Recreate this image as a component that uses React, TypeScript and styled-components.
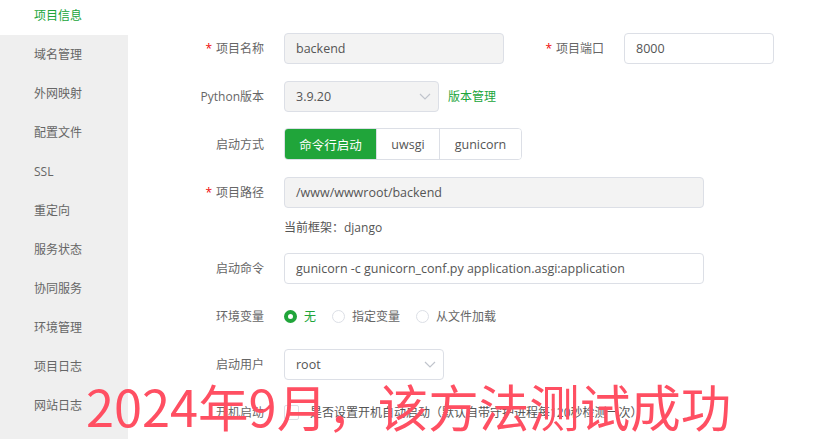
import styled, { createGlobalStyle } from 'styled-components'

const GREEN = '#20a53a'

const GlobalStyle = createGlobalStyle`
  html, body {
    margin: 0;
    padding: 0;
    background: #fff;
    overflow: hidden;
  }
  body {
    font-family: 'Open Sans', 'Noto Sans CJK SC', sans-serif;
    font-size: 12px;
    color: #666;
  }
`

const menu = [
  '项目信息',
  '域名管理',
  '外网映射',
  '配置文件',
  'SSL',
  '重定向',
  '服务状态',
  '协同服务',
  '环境管理',
  '项目日志',
  '网站日志',
]

function Chevron() {
  return (
    <svg width="14" height="14" viewBox="0 0 14 14">
      <path d="M2 5 L7 10 L12 5" fill="none" stroke="#c0c4cc" strokeWidth="1.2" />
    </svg>
  )
}

function Label({ text, required }: { text: string; required?: boolean }) {
  return (
    <LabelBox>
      {required && <Star>*</Star>}
      {text}
    </LabelBox>
  )
}

export default function App() {
  return (
    <Page>
      <GlobalStyle />
      <Sidebar>
        {menu.map((m, i) => (
          <MenuItem key={m} $active={i === 0}>
            {m}
          </MenuItem>
        ))}
      </Sidebar>

      <Main>
        <Form>
          <Row>
            <Label text="项目名称" required />
            <Input $width={220} $disabled>
              backend
            </Input>
            <SubLabel>
              <Star>*</Star>项目端口
            </SubLabel>
            <Input $width={150}>8000</Input>
          </Row>

          <Row>
            <Label text="Python版本" />
            <Input $width={155} $disabled $select>
              3.9.20
              <Chevron />
            </Input>
            <Link>版本管理</Link>
          </Row>

          <Row>
            <Label text="启动方式" />
            <Group>
              <GroupBtn $active $width={91}>
                命令行启动
              </GroupBtn>
              <GroupBtn $width={62}>uwsgi</GroupBtn>
              <GroupBtn $width={81}>gunicorn</GroupBtn>
            </Group>
          </Row>

          <Row>
            <Label text="项目路径" required />
            <Input $width={420} $disabled>
              /www/wwwroot/backend
            </Input>
          </Row>

          <Note>当前框架：django</Note>

          <Row>
            <Label text="启动命令" />
            <Input $width={420}>gunicorn -c gunicorn_conf.py application.asgi:application</Input>
          </Row>

          <Row>
            <Label text="环境变量" />
            <Radios>
              <RadioItem $checked>
                <RadioDot $checked />无
              </RadioItem>
              <RadioItem>
                <RadioDot />指定变量
              </RadioItem>
              <RadioItem>
                <RadioDot />从文件加载
              </RadioItem>
            </Radios>
          </Row>

          <Row>
            <Label text="启动用户" />
            <Input $width={160} $select>
              root
              <Chevron />
            </Input>
          </Row>

          <Row>
            <Label text="开机启动" />
            <CheckBox />
            <CheckText>是否设置开机自动启动（默认自带守护进程每120秒检测一次）</CheckText>
          </Row>
        </Form>
      </Main>

      <Stamp>2024年9月，该方法测试成功</Stamp>
    </Page>
  )
}

const Page = styled.div`
  position: relative;
  display: flex;
  width: 827px;
  height: 439px;
  overflow: hidden;
`

const Sidebar = styled.div`
  width: 128px;
  flex: 0 0 128px;
  background: #efefef;
  display: flex;
  flex-direction: column;
  margin-top: -4px;
`

const MenuItem = styled.div<{ $active?: boolean }>`
  height: 39px;
  line-height: 39px;
  padding-left: 34px;
  font-size: 12px;
  color: ${(p) => (p.$active ? GREEN : '#666')};
  background: ${(p) => (p.$active ? '#fff' : 'transparent')};
`

const Main = styled.div`
  flex: 1;
  padding: 32px 0 0 26px;
`

const Form = styled.div`
  display: flex;
  flex-direction: column;
  gap: 16px;
`

const Row = styled.div`
  display: flex;
  align-items: center;
  height: 32px;
`

const LabelBox = styled.div`
  width: 110px;
  margin-right: 20px;
  text-align: right;
  font-size: 12px;
  color: #666;
`

const SubLabel = styled(LabelBox)`
  width: 80px;
  margin-left: 20px;
`

const Star = styled.span`
  color: #ef0808;
  margin-right: 4px;
`

const Input = styled.div<{ $width: number; $disabled?: boolean; $select?: boolean }>`
  box-sizing: border-box;
  width: ${(p) => p.$width}px;
  height: 31px;
  padding: ${(p) => (p.$select ? '0 6px 0 11px' : '0 14px 0 11px')};
  display: flex;
  align-items: center;
  justify-content: ${(p) => (p.$select ? 'space-between' : 'flex-start')};
  border: 1px solid #dcdfe6;
  border-radius: 4px;
  background: ${(p) => (p.$disabled ? '#f3f3f3' : '#fff')};
  font-size: 12.5px;
  color: #555;
  white-space: nowrap;
`

const Link = styled.span`
  margin-left: 9px;
  color: ${GREEN};
  font-size: 12px;
`

const Group = styled.div`
  display: flex;
  height: 32px;
  border: 1px solid #dcdfe6;
  border-radius: 4px;
  overflow: hidden;
  box-sizing: border-box;
`

const GroupBtn = styled.div<{ $active?: boolean; $width: number }>`
  width: ${(p) => p.$width}px;
  display: flex;
  align-items: center;
  justify-content: center;
  font-size: 12.5px;
  color: ${(p) => (p.$active ? '#fff' : '#555')};
  background: ${(p) => (p.$active ? GREEN : '#fff')};
  & + & {
    border-left: 1px solid #dcdfe6;
  }
`

const Note = styled.div`
  margin: -6px 0 -2px 130px;
  height: 20px;
  line-height: 20px;
  font-size: 12px;
  color: #555;
`

const Radios = styled.div`
  display: flex;
  align-items: center;
  gap: 16px;
`

const RadioItem = styled.label<{ $checked?: boolean }>`
  display: flex;
  align-items: center;
  gap: 7px;
  font-size: 12px;
  color: ${(p) => (p.$checked ? GREEN : '#666')};
`

const RadioDot = styled.span<{ $checked?: boolean }>`
  box-sizing: border-box;
  width: 13px;
  height: 13px;
  border-radius: 50%;
  border: ${(p) => (p.$checked ? `4px solid ${GREEN}` : '1px solid #dcdfe6')};
  background: #fff;
`

const CheckBox = styled.span`
  box-sizing: border-box;
  width: 15px;
  height: 15px;
  border: 1px solid #dcdfe6;
  border-radius: 2px;
  margin-right: 11px;
`

const CheckText = styled.span`
  font-size: 12px;
  color: #555;
`

const Stamp = styled.div`
  position: absolute;
  left: 86px;
  top: 375px;
  font-family: 'Noto Sans CJK SC', sans-serif;
  font-size: 50.5px;
  line-height: 60px;
  color: #ff4f62;
  white-space: nowrap;
  pointer-events: none;
`
